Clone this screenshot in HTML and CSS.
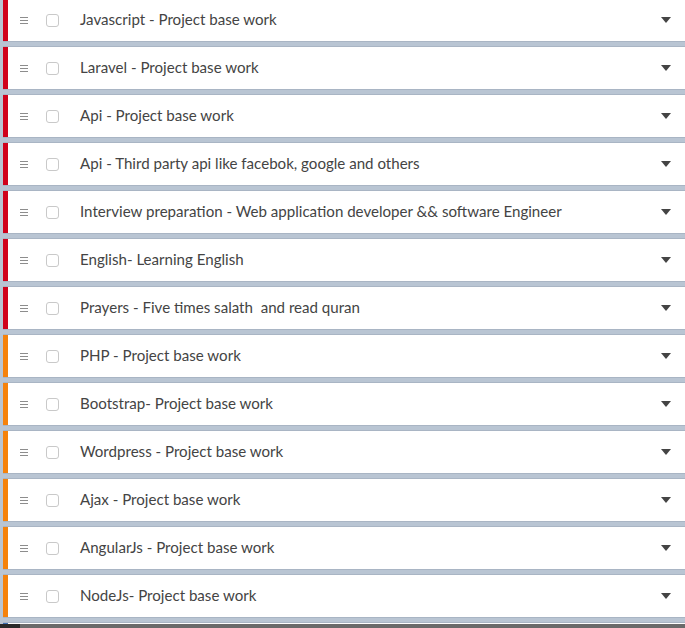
FILE: index.html
```html
<!DOCTYPE html>
<html>
<head>
<meta charset="utf-8">
<link rel="stylesheet" href="styles.css">
</head>
<body>
<ul class="list">
  <li class="item red"><span class="handle"></span><span class="check"></span><span class="title">Javascript - Project base work</span><span class="caret"></span></li>
  <li class="item red"><span class="handle"></span><span class="check"></span><span class="title">Laravel - Project base work</span><span class="caret"></span></li>
  <li class="item red"><span class="handle"></span><span class="check"></span><span class="title">Api - Project base work</span><span class="caret"></span></li>
  <li class="item red"><span class="handle"></span><span class="check"></span><span class="title">Api - Third party api like facebok, google and others</span><span class="caret"></span></li>
  <li class="item red"><span class="handle"></span><span class="check"></span><span class="title">Interview preparation - Web application developer &amp;&amp; software Engineer</span><span class="caret"></span></li>
  <li class="item red"><span class="handle"></span><span class="check"></span><span class="title">English- Learning English</span><span class="caret"></span></li>
  <li class="item red"><span class="handle"></span><span class="check"></span><span class="title">Prayers - Five times salath&nbsp; and read quran</span><span class="caret"></span></li>
  <li class="item orange"><span class="handle"></span><span class="check"></span><span class="title">PHP - Project base work</span><span class="caret"></span></li>
  <li class="item orange"><span class="handle"></span><span class="check"></span><span class="title">Bootstrap- Project base work</span><span class="caret"></span></li>
  <li class="item orange"><span class="handle"></span><span class="check"></span><span class="title">Wordpress - Project base work</span><span class="caret"></span></li>
  <li class="item orange"><span class="handle"></span><span class="check"></span><span class="title">Ajax - Project base work</span><span class="caret"></span></li>
  <li class="item orange"><span class="handle"></span><span class="check"></span><span class="title">AngularJs - Project base work</span><span class="caret"></span></li>
  <li class="item orange"><span class="handle"></span><span class="check"></span><span class="title">NodeJs- Project base work</span><span class="caret"></span></li>
  <li class="item blue"></li>
</ul>
<div class="bottombar"></div>
</body>
</html>
```
FILE: styles.css
```css
html, body {
  margin: 0;
  padding: 0;
  overflow: hidden;
}
body {
  background: #b9c5d3;
  font-family: "Lato", "Open Sans", sans-serif;
  font-size: 15.1px;
  color: #444;
}
.list {
  list-style: none;
  margin: -1px 0 0 3px;
  padding: 0;
}
.item {
  display: flex;
  align-items: center;
  height: 42px;
  background: #fff;
  border-left: 5px solid #d0021b;
  margin-bottom: 6px;
  box-shadow: 0 1px 0 #a9b5c4, 0 -1px 0 #a9b5c4;
  box-sizing: border-box;
}
.item.red { border-left-color: #d0021b; }
.item.orange { border-left-color: #f5820b; }
.item.blue { border-left-color: #3d6fb2; }
.handle {
  width: 8px;
  height: 7px;
  margin-left: 12px;
  border-top: 1px solid #8d8d8d;
  border-bottom: 1px solid #8d8d8d;
  position: relative;
  box-sizing: border-box;
  flex: none;
}
.handle::after {
  content: "";
  position: absolute;
  left: 0;
  right: 0;
  top: 2px;
  height: 1px;
  background: #8d8d8d;
}
.check {
  width: 13px;
  height: 13px;
  margin-left: 18px;
  border: 1px solid #c9c9c9;
  border-radius: 3px;
  box-sizing: border-box;
  background: #fff;
  flex: none;
}
.title {
  margin-left: 21px;
  margin-bottom: 2px;
  flex: 1;
  white-space: nowrap;
}
.caret {
  width: 0;
  height: 0;
  border-left: 5px solid transparent;
  border-right: 5px solid transparent;
  border-top: 6px solid #444;
  margin-right: 14px;
  flex: none;
}
.bottombar {
  position: fixed;
  left: 0;
  right: 0;
  bottom: 0;
  height: 4px;
  background: linear-gradient(to right, #2a2a2a 0, #2a2a2a 20px, #6a6a6a 20px);
}
```
